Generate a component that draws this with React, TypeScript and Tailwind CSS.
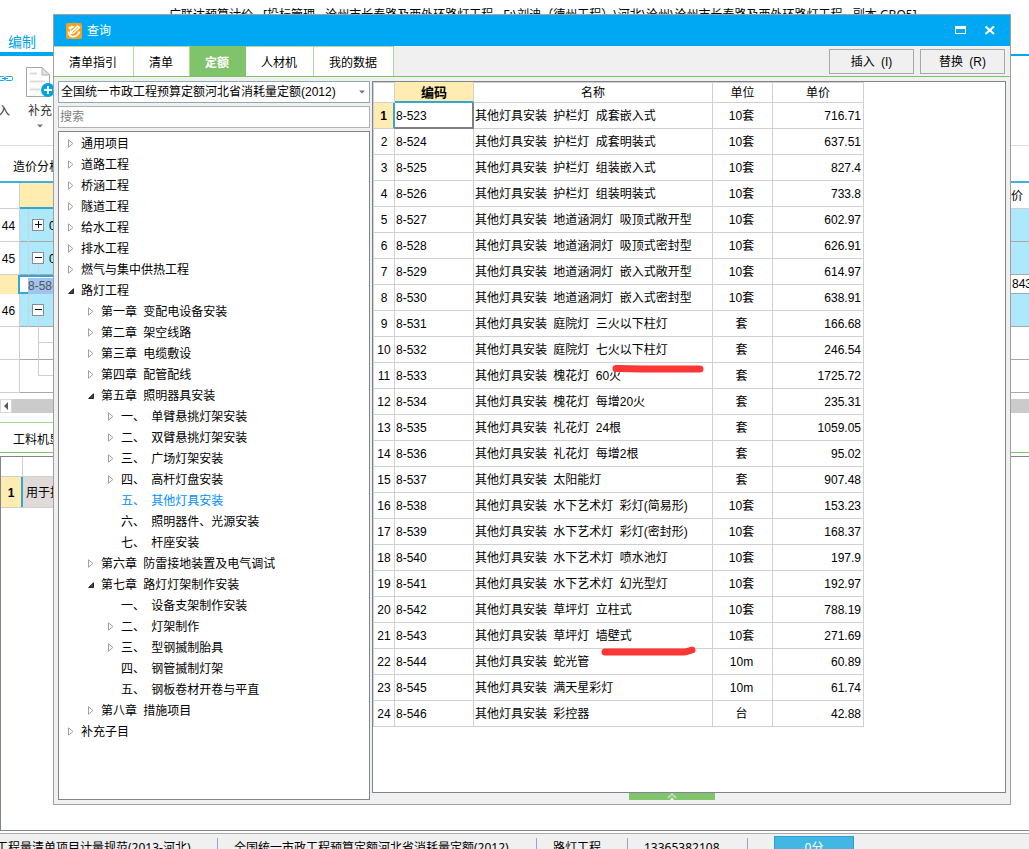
import { Fragment, useState } from "react";

const tabs = ["清单指引", "清单", "定额", "人材机", "我的数据"];

const tree = [
  { level: 0, text: "通用项目", state: "closed" },
  { level: 0, text: "道路工程", state: "closed" },
  { level: 0, text: "桥涵工程", state: "closed" },
  { level: 0, text: "隧道工程", state: "closed" },
  { level: 0, text: "给水工程", state: "closed" },
  { level: 0, text: "排水工程", state: "closed" },
  { level: 0, text: "燃气与集中供热工程", state: "closed" },
  { level: 0, text: "路灯工程", state: "open" },
  { level: 1, text: "第一章 变配电设备安装", state: "closed" },
  { level: 1, text: "第二章 架空线路", state: "closed" },
  { level: 1, text: "第三章 电缆敷设", state: "closed" },
  { level: 1, text: "第四章 配管配线", state: "closed" },
  { level: 1, text: "第五章 照明器具安装", state: "open" },
  { level: 2, text: "一、 单臂悬挑灯架安装", state: "closed" },
  { level: 2, text: "二、 双臂悬挑灯架安装", state: "closed" },
  { level: 2, text: "三、 广场灯架安装", state: "closed" },
  { level: 2, text: "四、 高杆灯盘安装", state: "closed" },
  { level: 2, text: "五、 其他灯具安装", state: "leaf" },
  { level: 2, text: "六、 照明器件、光源安装", state: "leaf" },
  { level: 2, text: "七、 杆座安装", state: "leaf" },
  { level: 1, text: "第六章 防雷接地装置及电气调试", state: "closed" },
  { level: 1, text: "第七章 路灯灯架制作安装", state: "open" },
  { level: 2, text: "一、 设备支架制作安装", state: "leaf" },
  { level: 2, text: "二、 灯架制作", state: "closed" },
  { level: 2, text: "三、 型钢揻制胎具", state: "closed" },
  { level: 2, text: "四、 钢管揻制灯架", state: "leaf" },
  { level: 2, text: "五、 钢板卷材开卷与平直", state: "leaf" },
  { level: 1, text: "第八章 措施项目", state: "closed" },
  { level: 0, text: "补充子目", state: "closed" },
];

const rows = [
  ["8-523", "其他灯具安装 护栏灯 成套嵌入式", "10套", "716.71"],
  ["8-524", "其他灯具安装 护栏灯 成套明装式", "10套", "637.51"],
  ["8-525", "其他灯具安装 护栏灯 组装嵌入式", "10套", "827.4"],
  ["8-526", "其他灯具安装 护栏灯 组装明装式", "10套", "733.8"],
  ["8-527", "其他灯具安装 地道涵洞灯 吸顶式敞开型", "10套", "602.97"],
  ["8-528", "其他灯具安装 地道涵洞灯 吸顶式密封型", "10套", "626.91"],
  ["8-529", "其他灯具安装 地道涵洞灯 嵌入式敞开型", "10套", "614.97"],
  ["8-530", "其他灯具安装 地道涵洞灯 嵌入式密封型", "10套", "638.91"],
  ["8-531", "其他灯具安装 庭院灯 三火以下柱灯", "套", "166.68"],
  ["8-532", "其他灯具安装 庭院灯 七火以下柱灯", "套", "246.54"],
  ["8-533", "其他灯具安装 槐花灯 60火", "套", "1725.72"],
  ["8-534", "其他灯具安装 槐花灯 每增20火", "套", "235.31"],
  ["8-535", "其他灯具安装 礼花灯 24根", "套", "1059.05"],
  ["8-536", "其他灯具安装 礼花灯 每增2根", "套", "95.02"],
  ["8-537", "其他灯具安装 太阳能灯", "套", "907.48"],
  ["8-538", "其他灯具安装 水下艺术灯 彩灯(简易形)", "10套", "153.23"],
  ["8-539", "其他灯具安装 水下艺术灯 彩灯(密封形)", "10套", "168.37"],
  ["8-540", "其他灯具安装 水下艺术灯 喷水池灯", "10套", "197.9"],
  ["8-541", "其他灯具安装 水下艺术灯 幻光型灯", "10套", "192.97"],
  ["8-542", "其他灯具安装 草坪灯 立柱式", "10套", "788.19"],
  ["8-543", "其他灯具安装 草坪灯 墙壁式", "10套", "271.69"],
  ["8-544", "其他灯具安装 蛇光管", "10m", "60.89"],
  ["8-545", "其他灯具安装 满天星彩灯", "10m", "61.74"],
  ["8-546", "其他灯具安装 彩控器", "台", "42.88"],
];

const indent = ["pl-[9px]", "pl-[29px]", "pl-[49px]"];

// half-width gap between the words, as wide as half a Chinese character
const Words = ({ text }: { text: string }) => (
  <>
    {text.split(" ").map((word, i) => (
      <Fragment key={i}>
        {i > 0 && <span className="mr-[3px]"> </span>}
        {word}
      </Fragment>
    ))}
  </>
);

const TreeArrow = ({ state }: { state: string }) => (
  <span className="w-[13px] shrink-0">
    {state === "closed" && (
      <svg width="6" height="9" viewBox="0 0 6 9">
        <path d="M0.5 0.8V8.2L4.9 4.5Z" fill="#fff" stroke="#a0a0a0" />
      </svg>
    )}
    {state === "open" && (
      <svg width="6" height="6" viewBox="0 0 6 6">
        <path d="M5.5 0.8V5.5H0.6Z" fill="#444" stroke="#262626" />
      </svg>
    )}
  </span>
);

const DownArrow = () => (
  <svg width="6" height="4" viewBox="0 0 6 4">
    <path d="M0 0.5H6L3 3.5Z" fill="#6b7280" />
  </svg>
);

const Expander = ({ open }: { open: boolean }) => (
  <svg width="33" height="33" viewBox="0 0 33 33" className="shrink-0" fill="none">
    <path d="M8.5 0V33M8.5 16.5H13" stroke="#cfd3d6" />
    {open && <path d="M18.5 22V33" stroke="#cfd3d6" />}
    <rect x="12.5" y="10.5" width="11" height="11" fill="#fff" stroke="#8c8c8c" />
    <path d={open ? "M15 15.5H22" : "M15 15.5H22M18.5 12V19"} stroke="#111" />
  </svg>
);

const Ribbon = () => (
  <div className="h-[90px] border-b border-[#dcdcdc] flex text-[#333]">
    <div className="w-6 pt-4 flex flex-col">
      <svg width="14" height="14" viewBox="0 0 14 14" fill="none" stroke="#18a5e8">
        <rect x="-3.5" y="4.5" width="8" height="4" rx="1" />
        <rect x="5.5" y="4.5" width="7" height="4" rx="1" />
        <path d="M2 6.5H8" />
      </svg>
      <span className="mt-4 -ml-0.5 leading-[18px]">入</span>
    </div>
    <div className="w-8 pt-[10px] flex flex-col items-center">
      <svg width="30" height="32" viewBox="0 0 30 32">
        <path d="M1.5 1.5H17L24.5 9V30.5H1.5Z" fill="#fff" stroke="#a6a6a6" />
        <path d="M17 1.5V9H24.5Z" fill="#e4e4e4" stroke="#b4b4b4" />
        <path d="M5 7.5H12M5 15.5H20M5 23.5H15" stroke="#dcdcdc" strokeWidth="2" />
        <circle cx="23" cy="24" r="7" fill="#00a2e8" />
        <path d="M19 24H27M23 20V28" stroke="#fff" strokeWidth="2" />
      </svg>
      <span className="mt-1 leading-[18px]">补充</span>
      <span className="mt-1">
        <DownArrow />
      </span>
    </div>
  </div>
);

const Estimate = () => (
  <div>
    <div className="h-[35px] pl-[13px] leading-[42px]">造价分析</div>
    <div className="border-t-2 border-[#3fb1df]">
      <div className="h-[26px] flex">
        <div className="w-5 border-r border-b border-[#cfcfcf]" />
        <div className="w-20 bg-[#ffecb0] border-b-2 border-[#34a6d6]" />
        <div className="flex-1 border-b border-[#cfcfcf]" />
        <div className="w-[18px] border-b border-[#cfcfcf] leading-[26px]">价</div>
      </div>
      {[
        ["44", false],
        ["45", true],
      ].map(([no, open]) => (
        <div key={String(no)} className="h-[33px] flex">
          <div className="w-5 border-r border-b border-[#cfcfcf] leading-[34px] text-center pr-0.5">
            {no}
          </div>
          <div className="flex-1 flex bg-[#ade9fb] border-b border-[#a8a8a8]">
            <Expander open={Boolean(open)} />
            <span className="-ml-1 leading-[34px]">0</span>
          </div>
        </div>
      ))}
      <div className="h-[19px] flex">
        <div className="w-[18px] bg-[#ffecb0]" />
        <div className="w-40 border-2 border-r-0 border-[#34a6d6] pl-2 pt-px">
          <span className="bg-[#a1c3f0] text-[#555] block leading-[16px]">8-58-1</span>
        </div>
        <div className="flex-1 border-b border-[#a8a8a8]" />
        <div className="w-[17px] border-b border-[#a8a8a8] leading-[19px]">843</div>
      </div>
      <div className="h-[33px] flex">
        <div className="w-5 border-r border-b border-[#cfcfcf] leading-[34px] text-center pr-0.5">
          46
        </div>
        <div className="flex-1 bg-[#ade9fb] border-b border-[#a8a8a8]">
          <Expander open />
        </div>
      </div>
      <div className="h-[33px] flex">
        <div className="w-5 border-r border-b border-[#cfcfcf]" />
        <div className="flex-1 border-b border-[#a8a8a8]">
          <svg width="33" height="33" viewBox="0 0 33 33" stroke="#cfcfcf" fill="none">
            <path d="M18.5 0V33M18.5 15.5H33" />
          </svg>
        </div>
      </div>
      <div className="h-[33px] flex">
        <div className="w-5 border-r border-b border-[#cfcfcf]" />
        <div className="flex-1 border-b border-[#a8a8a8]">
          <svg width="33" height="33" viewBox="0 0 33 33" stroke="#cfcfcf" fill="none">
            <path d="M18.5 0V15.5H33" />
          </svg>
        </div>
      </div>
    </div>
    <div className="mt-[6px] h-[14px] flex bg-[#cbcbcb]">
      <div className="w-3 bg-white border border-[#d8d8d8] flex items-center justify-center">
        <svg width="4" height="8" viewBox="0 0 4 8">
          <path d="M4 0V8L0 4Z" fill="#555b66" />
        </svg>
      </div>
    </div>
  </div>
);

const Content = () => (
  <div className="mt-[9px] flex-1 flex flex-col">
    <div className="flex">
      <div className="w-40 h-[30px] border-t border-[#9fdc8c] pl-[13px] leading-[34px]">
        工料机显示
      </div>
    </div>
    <div className="border-t border-[#7dc36b] h-1" />
    <div className="flex-1 border-t border-l border-[#80848f]">
      <div className="h-5 flex border-b border-[#d0d0d0] w-60">
        <div className="w-[22px] border-r border-[#d0d0d0]" />
      </div>
      <div className="flex w-60 h-[31px] leading-[32px] border-b border-[#d0d0d0]">
        <div className="w-5 bg-[#ffecb0] text-center font-bold">1</div>
        <div className="flex-1 border-l-2 border-[#34a6d6] bg-[#e0dbd9] pl-[3px]">用于投标</div>
      </div>
    </div>
  </div>
);

const StatusBar = () => (
  <div className="mt-[2px] h-4 border-t border-[#a9adb0] bg-[#f0f0f0] flex overflow-hidden whitespace-nowrap leading-[28px] font-['Noto_Sans','Noto_Sans_CJK_SC',sans-serif]">
    <span className="-ml-1 w-[221px]">工程量清单项目计量规范(2013-河北)</span>
    <span className="mt-1 w-[319px] border-l border-[#9aa5b5] pl-4 leading-[20px]">
      全国统一市政工程预算定额河北省消耗量定额(2012)
    </span>
    <span className="mt-1 w-[91px] border-l border-[#9aa5b5] pl-4 leading-[20px]">路灯工程</span>
    <span className="mt-1 w-[120px] border-l border-[#9aa5b5] pl-4 leading-[20px]">
      13365382108
    </span>
    <span className="mt-1 w-[27px] border-l border-[#9aa5b5]" />
    <button
      type="button"
      className="mt-[2px] h-6 w-20 bg-[#43b7e4] border border-[#2d9fcd] text-white leading-[20px]"
    >
      0分
    </button>
  </div>
);

const PriceTable = () => (
  <table className="table-fixed w-[491px] border-separate border-spacing-0 border-l border-[#d0d0d0] leading-[16px]">
    <colgroup>
      <col className="w-[21px]" />
      <col className="w-[79px]" />
      <col className="w-[239px]" />
      <col className="w-[60px]" />
      <col className="w-[91px]" />
    </colgroup>
    <thead>
      <tr className="h-[21px]">
        <th className="p-0 border-t border-r border-b border-[#d0d0d0]" />
        <th className="p-0 pt-0.5 border-r border-r-[#d0d0d0] border-b-2 border-b-[#34a6d6] bg-[#ffecb0] text-[13px]">
          编码
        </th>
        <th className="p-0 pt-px border-t border-r border-b border-[#d0d0d0] font-normal">名称</th>
        <th className="p-0 pt-px border-t border-r border-b border-[#d0d0d0] font-normal">单位</th>
        <th className="p-0 pt-px border-t border-r border-b border-[#d0d0d0] font-normal">单价</th>
      </tr>
    </thead>
    <tbody>
      {rows.map(([code, name, unit, price], i) => (
        <tr key={code} className="h-[26px]">
          <td
            className={
              i === 0
                ? "p-0 pt-px text-center font-bold bg-[#ffecb0] border-b border-b-[#d0d0d0] border-r-2 border-r-[#34a6d6]"
                : "p-0 pt-px text-center border-r border-b border-[#d0d0d0]"
            }
          >
            {i + 1}
          </td>
          <td
            className={
              i === 0
                ? "p-0 pl-px pt-px border-r-2 border-b-2 border-[#808080]"
                : "p-0 pl-px pt-px border-r border-b border-[#d0d0d0]"
            }
          >
            {code}
          </td>
          <td className="p-0 pl-px pt-px border-r border-b border-[#d0d0d0] whitespace-nowrap">
            <Words text={name} />
          </td>
          <td className="p-0 pr-0.5 pt-px text-center border-r border-b border-[#d0d0d0]">{unit}</td>
          <td className="p-0 pr-0.5 pt-px text-right border-r border-b border-[#d0d0d0]">{price}</td>
        </tr>
      ))}
    </tbody>
  </table>
);

const QueryDialog = () => {
  const [tab, setTab] = useState("定额");
  const [selected, setSelected] = useState(17);
  const [keyword, setKeyword] = useState("");

  return (
    <div
      role="dialog"
      aria-label="查询"
      className="absolute top-[14px] bottom-[44px] left-[53px] right-[18px] bg-[#f0f0f0] border border-[#a0a0a0] flex flex-col"
    >
      <div className="h-[31px] shrink-0 bg-[#00a8f3] text-white flex items-center pl-3 pr-[14px]">
        <svg width="16" height="16" viewBox="0 0 16 16">
          <rect width="16" height="16" rx="2" fill="#f7a21b" />
          <path d="M2 5C4 3 6 2.5 8.500 3.500L4.500 7C3 9 3.500 11 5 11.500L8 9.500" fill="#fff" />
          <path d="M2.500 8.500C2.500 12 4.500 14 8 13.500C11 13 12.500 11.500 13.500 8.500" stroke="#fff" strokeWidth="1.800" fill="none" />
          <path d="M4.500 11L5.500 8L11.500 2L14.500 4.500L8 10.500Z" fill="#fff" />
          <path d="M6.500 9.500L12 4.500" stroke="#f7a21b" />
        </svg>
        <span className="ml-[5px]">查询</span>
        <button type="button" aria-label="最大化" className="ml-auto">
          <svg width="12" height="9" viewBox="0 0 12 9">
            <path d="M0 0H11V8H0ZM1 3V7H10V3Z" fill="#fff" fillRule="evenodd" />
          </svg>
        </button>
        <button type="button" aria-label="关闭" className="ml-[17px]">
          <svg width="12" height="10" viewBox="0 0 12 10">
            <path d="M1.5 0.5L10 8M10 0.5L1.5 8" stroke="#fff" strokeWidth="2.2" />
          </svg>
        </button>
      </div>

      <div className="h-[31px] shrink-0 border-b border-[#7dc36b] flex">
        {tabs.map((name) => (
          <button
            key={name}
            type="button"
            onClick={() => setTab(name)}
            className={
              name === tab
                ? "pt-0.5 pl-[15px] pr-4 border-t border-r border-[#7fc36a] bg-[#7fc36a] text-white font-bold"
                : "pt-0.5 pl-[15px] pr-4 border-t border-r border-[#a9dc9b] bg-white"
            }
          >
            {name}
          </button>
        ))}
        <div className="ml-auto pt-[3px] pr-[5px] flex gap-[6px]">
          <button type="button" className="w-[85px] h-[25px] border border-[#a8a8a8]">
            <Words text="插入 (I)" />
          </button>
          <button type="button" className="w-[85px] h-[25px] border border-[#a8a8a8]">
            <Words text="替换 (R)" />
          </button>
        </div>
      </div>

      <div className="flex-1 min-h-0 flex gap-[2px] pt-1 pl-1 pr-1 pb-1">
        <div className="w-[312px] shrink-0 flex flex-col gap-[3px]">
          <div className="relative">
            <select
              aria-label="定额库"
              className="appearance-none block w-full h-[22px] pl-0.5 bg-white border border-[#8fa9b2]"
            >
              <option>全国统一市政工程预算定额河北省消耗量定额(2012)</option>
            </select>
            <span className="absolute right-[5px] top-[9px] pointer-events-none">
              <DownArrow />
            </span>
          </div>
          <input
            type="text"
            aria-label="搜索"
            placeholder="搜索"
            value={keyword}
            onChange={(e) => setKeyword(e.target.value)}
            className="block w-full h-[22px] pl-px bg-white border border-[#b0b0b0] placeholder:text-[#808080]"
          />
          <ul className="flex-1 min-h-0 pt-px bg-white border border-[#80848f] overflow-hidden">
            {tree.map((node, i) => (
              <li key={i} className={indent[node.level]}>
                <button
                  type="button"
                  onClick={() => setSelected(i)}
                  className={
                    i === selected
                      ? "h-[21px] flex items-center text-[#0090ff]"
                      : "h-[21px] flex items-center"
                  }
                >
                  <TreeArrow state={node.state} />
                  <span className="whitespace-nowrap">
                    <Words text={node.text} />
                  </span>
                </button>
              </li>
            ))}
          </ul>
        </div>

        <div className="flex-1 min-w-0 flex flex-col items-center">
          <div className="relative w-full flex-1 min-h-0 bg-white border border-[#80848f] overflow-hidden">
            <PriceTable />
            <svg className="absolute left-[239px] top-[282px]" width="92" height="9" viewBox="0 0 92 9">
              <path d="M4 4.5L30 5L88 5" stroke="#fc3535" strokeWidth="7" strokeLinecap="round" fill="none" />
            </svg>
            <svg className="absolute left-[228px] top-[562px]" width="96" height="13" viewBox="0 0 96 13">
              <path d="M4 8L84 8L91 6" stroke="#fc3535" strokeWidth="7" strokeLinecap="round" strokeLinejoin="round" fill="none" />
            </svg>
          </div>
          <button
            type="button"
            aria-label="展开"
            className="ml-[-34px] h-[7px] w-[86px] shrink-0 bg-[#82c46c] flex justify-center"
          >
            <svg width="10" height="7" viewBox="0 0 10 7" fill="none">
              <path d="M1 5L5 1L9 5" stroke="#c4e5b8" strokeWidth="1.5" />
              <path d="M3 7L5 4.5L7 7Z" fill="#fff" />
            </svg>
          </button>
        </div>
      </div>
    </div>
  );
};

const App = () => {
  return (
    <div
      lang="zh-CN"
      className="relative h-screen overflow-hidden bg-white text-black text-[12px] leading-[16px] font-['Liberation_Sans','Noto_Sans_CJK_SC',sans-serif]"
    >
      <div className="h-full flex flex-col">
        <div className="h-[30px] pl-[169px] leading-[30px] whitespace-nowrap font-['Noto_Sans','Noto_Sans_CJK_SC',sans-serif]">
          广联达预算计价 - [投标管理 - 沧州市长泰路及西外环路灯工程 -
          F:\刘迪（德州工程）\河北\沧州\沧州市长泰路及西外环路灯工程 - 副本.GBQ5]
        </div>
        <div className="h-[26px] flex">
          <div className="w-[100px] pl-2 border-b-4 border-[#00a8f3] text-[#00a2e8] text-[14px] leading-[24px]">
            编制
          </div>
          <div className="flex-1 border-b-2 border-[#00a8f3]" />
        </div>
        <Ribbon />
        <Estimate />
        <Content />
        <div className="border-t border-[#80848f]" />
        <StatusBar />
      </div>
      <QueryDialog />
    </div>
  );
};

export default App;
